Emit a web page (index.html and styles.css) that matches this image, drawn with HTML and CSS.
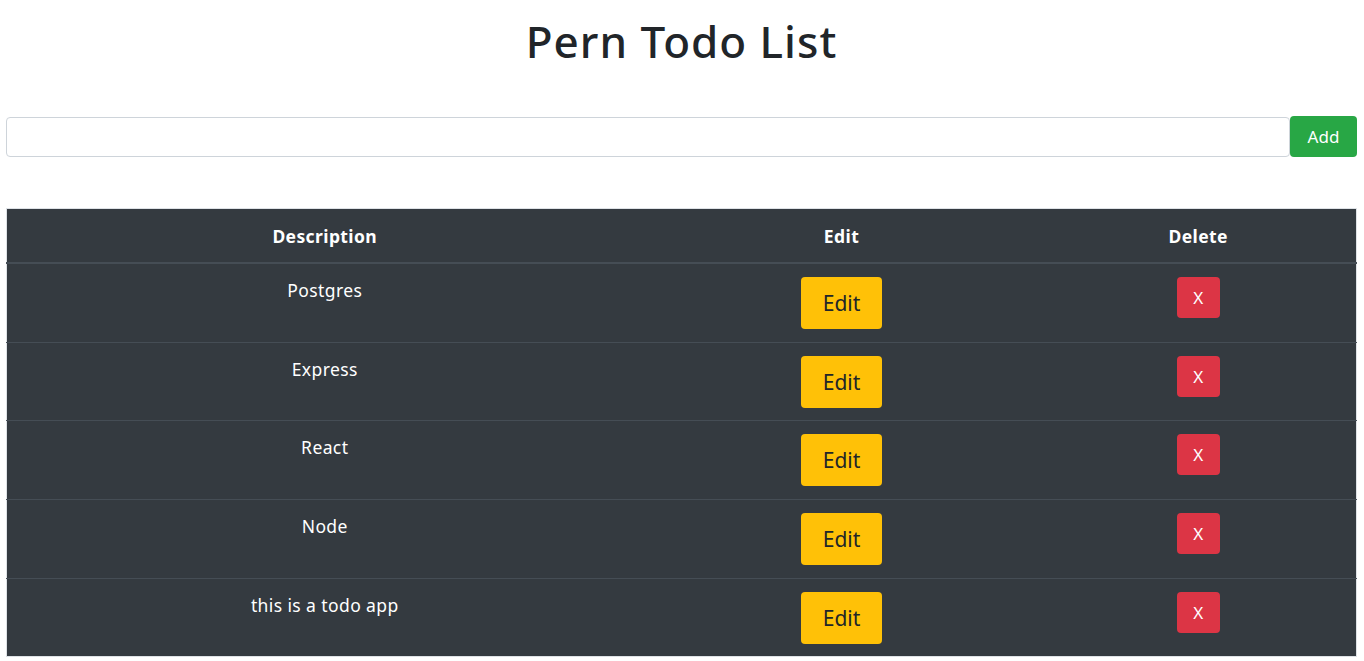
FILE: index.html
```
<!DOCTYPE html>
<html>
<head>
<meta charset="utf-8">
<link rel="stylesheet" href="styles.css">
</head>
<body>
<div class="page">
  <h1 class="title">Pern Todo List</h1>
  <form class="add-form">
    <input class="add-input" type="text">
    <button class="btn btn-add" type="button">Add</button>
  </form>
  <table class="todo-table">
    <thead>
      <tr><th class="col-desc">Description</th><th class="col-edit">Edit</th><th class="col-del">Delete</th></tr>
    </thead>
    <tbody>
      <tr><td>Postgres</td><td><button class="btn btn-edit" type="button">Edit</button></td><td><button class="btn btn-del" type="button">X</button></td></tr>
      <tr><td>Express</td><td><button class="btn btn-edit" type="button">Edit</button></td><td><button class="btn btn-del" type="button">X</button></td></tr>
      <tr><td>React</td><td><button class="btn btn-edit" type="button">Edit</button></td><td><button class="btn btn-del" type="button">X</button></td></tr>
      <tr><td>Node</td><td><button class="btn btn-edit" type="button">Edit</button></td><td><button class="btn btn-del" type="button">X</button></td></tr>
      <tr><td>this is a todo app</td><td><button class="btn btn-edit" type="button">Edit</button></td><td><button class="btn btn-del" type="button">X</button></td></tr>
    </tbody>
  </table>
</div>
</body>
</html>
```
FILE: styles.css
```
* { box-sizing: border-box; }
html, body { margin: 0; padding: 0; background: #fff; }
body {
  font-family: "Noto Sans", "Open Sans", sans-serif;
  color: #212529;
  font-size: 17px;
}
.page {
  padding: 0 7px 0 6px;
}
.title {
  margin: 0;
  padding-top: 14px;
  text-align: center;
  font-size: 44px;
  font-weight: 500;
  line-height: 54px;
  letter-spacing: 1px;
}
.add-form {
  display: flex;
  margin-top: 48px;
  align-items: center;
}
.add-input {
  flex: 1;
  height: 40px;
  border: 1px solid #ced4da;
  border-radius: 4px;
  background: #fff;
  margin: 0;
}
.btn {
  font-family: inherit;
  border: 1px solid transparent;
  border-radius: 4px;
  cursor: pointer;
  margin: 0;
}
.btn-add {
  width: 67px;
  height: 41px;
  background: #28a745;
  color: #fff;
  font-size: 17px;
}
.todo-table {
  width: 100%;
  margin-top: 51px;
  border-collapse: collapse;
  background: #343a40;
  color: #fff;
  border: 1px solid #dee2e6;
}
.todo-table th, .todo-table td {
  text-align: center;
  vertical-align: top;
  padding: 13px;
  border-top: 1px solid #454d55;
  line-height: 26px;
  font-size: 17.5px;
  letter-spacing: 0.4px;
}
.todo-table td {
  padding-top: 13px;
  padding-bottom: 12.7px;
}
.todo-table th {
  font-weight: 700;
  padding-top: 14px;
  border-bottom: 2px solid #454d55;
  border-top: none;
}
.col-desc { width: 636px; }
.col-edit { width: 398px; }
.btn-edit {
  width: 81px;
  height: 52px;
  background: #ffc107;
  color: #212529;
  font-size: 21px;
  letter-spacing: 0;
  border-radius: 4px;
}
.btn-del {
  width: 43px;
  height: 41px;
  background: #dc3545;
  color: #fff;
  font-size: 17px;
  letter-spacing: 0;
}
```
